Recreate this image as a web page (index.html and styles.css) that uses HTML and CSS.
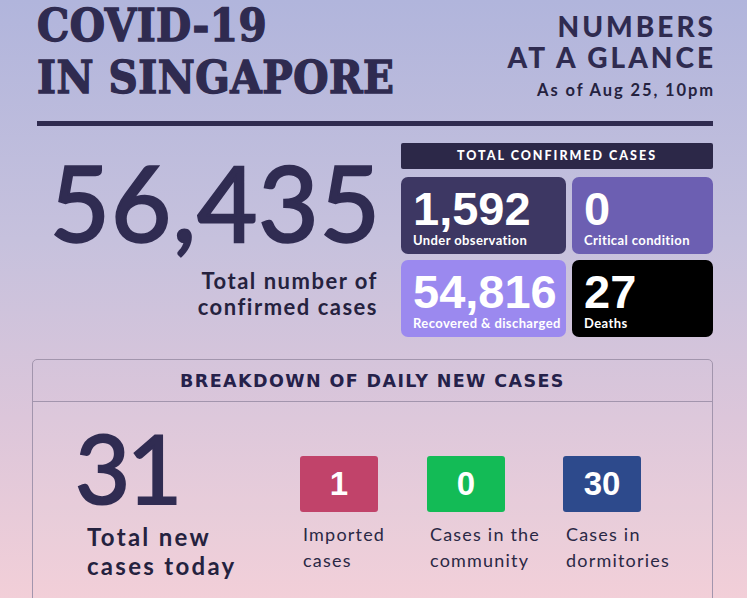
FILE: index.html
```html
<!DOCTYPE html>
<html lang="en">
<head>
<meta charset="utf-8">
<title>COVID-19 in Singapore</title>
<link rel="stylesheet" href="styles.css">
</head>
<body>
<div class="page">
  <header class="top">
    <h1 class="title">COVID-19<br>IN SINGAPORE</h1>
    <div class="glance">
      <div class="glance-h">NUMBERS<br>AT A GLANCE</div>
      <div class="asof">As of Aug 25, 10pm</div>
    </div>
  </header>
  <div class="rule"></div>
  <section class="totals">
    <div class="total-left">
      <div class="bignum">56,435</div>
      <div class="biglabel">Total number of<br>confirmed cases</div>
    </div>
    <div class="total-right">
      <div class="banner">TOTAL CONFIRMED CASES</div>
      <div class="cards">
        <div class="card c-obs"><div class="card-num">1,592</div><div class="card-lbl">Under observation</div></div>
        <div class="card c-crit"><div class="card-num">0</div><div class="card-lbl">Critical condition</div></div>
        <div class="card c-rec"><div class="card-num">54,816</div><div class="card-lbl">Recovered &amp; discharged</div></div>
        <div class="card c-death"><div class="card-num">27</div><div class="card-lbl">Deaths</div></div>
      </div>
    </div>
  </section>
  <section class="breakdown">
    <div class="bd-head">BREAKDOWN OF DAILY NEW CASES</div>
    <div class="bd-body">
      <div class="today">
        <div class="today-num">31</div>
        <div class="today-lbl">Total new<br>cases today</div>
      </div>
      <div class="item">
        <div class="box b-imp">1</div>
        <div class="item-lbl">Imported<br>cases</div>
      </div>
      <div class="item">
        <div class="box b-com">0</div>
        <div class="item-lbl">Cases in the<br>community</div>
      </div>
      <div class="item">
        <div class="box b-dorm">30</div>
        <div class="item-lbl">Cases in<br>dormitories</div>
      </div>
    </div>
  </section>
</div>
</body>
</html>
```

FILE: styles.css
```css
html, body {
  margin: 0;
  padding: 0;
}
body {
  width: 747px;
  height: 598px;
  overflow: hidden;
  background: linear-gradient(to bottom, #b1b5dc 0%, #c6c1dd 40%, #dcc6da 70%, #f2cfd8 100%);
  color: #2e2a4f;
  font-family: "Lato", "Liberation Sans", sans-serif;
}
.page {
  padding: 0 34px 0 37px;
}
.top {
  display: flex;
  justify-content: space-between;
  align-items: flex-start;
}
.title {
  margin: 0;
  font-family: "DejaVu Serif Condensed", "DejaVu Serif", serif;
  font-weight: 700;
  font-size: 45px;
  line-height: 52px;
  color: #2f2b50;
  -webkit-text-stroke: 1.3px #2f2b50;
  letter-spacing: 0.5px;
}
.glance {
  text-align: right;
  padding-top: 11px;
}
.glance-h {
  font-weight: 900;
  font-size: 28px;
  line-height: 31px;
  letter-spacing: 3px;
  margin-right: -3px;
  color: #2f2b50;
}
.asof {
  font-weight: 700;
  font-size: 16.5px;
  line-height: 22px;
  margin-top: 6px;
  letter-spacing: 1.9px;
  margin-right: -2px;
  color: #25223f;
}
.rule {
  height: 5px;
  background: #2f2b50;
  margin-top: 17px;
}
.totals {
  display: grid;
  grid-template-columns: 1fr 312px;
  column-gap: 21px;
  margin-top: 17px;
}
.total-left {
  text-align: right;
}
.bignum {
  font-family: "Lato", sans-serif;
  font-weight: 400;
  font-size: 104px;
  line-height: 100px;
  margin-top: 9px;
  margin-right: -1px;
  color: #302c52;
  -webkit-text-stroke: 2.4px #302c52;
  letter-spacing: 1px;
}
.biglabel {
  font-weight: 700;
  font-size: 22px;
  line-height: 26px;
  letter-spacing: 1.5px;
  margin-top: 16px;
  margin-right: 2px;
  color: #25223f;
}
.banner {
  height: 26px;
  line-height: 26px;
  background: #2c2848;
  color: #fff;
  text-align: center;
  font-weight: 900;
  font-size: 12.5px;
  letter-spacing: 2px;
  border-radius: 2px;
}
.cards {
  display: grid;
  grid-template-columns: 165px 1fr;
  grid-auto-rows: 77px;
  gap: 6px;
  margin-top: 8px;
}
.card {
  border-radius: 7px;
  color: #fff;
  padding: 10px 0 0 12px;
  box-sizing: border-box;
  white-space: nowrap;
}
.card-num {
  font-family: "Liberation Sans", Arial, sans-serif;
  font-weight: 700;
  font-size: 47px;
  line-height: 44px;
}
.card-lbl {
  font-weight: 700;
  font-size: 13px;
  line-height: 18px;
  letter-spacing: 0.4px;
}
.c-obs { background: #3d3763; }
.c-crit { background: #6c5fb2; }
.c-rec { background: #9b89ef; }
.c-death { background: #000; }
.breakdown {
  margin: 22px 0 0 -5px;
  border: 1px solid #a295ad;
  border-radius: 5px;
  height: 300px;
}
.bd-head {
  height: 41px;
  line-height: 42px;
  border-bottom: 1px solid #a295ad;
  text-align: center;
  font-family: "DejaVu Sans", sans-serif;
  font-weight: 700;
  font-size: 17.5px;
  color: #25214a;
  letter-spacing: 1.4px;
}
.bd-body {
  display: grid;
  grid-template-columns: 225px 127px 136px auto;
  align-items: start;
  padding: 20px 0 0 42px;
  background: rgba(255, 255, 255, 0.04);
}
.today-num {
  font-family: "Lato", sans-serif;
  font-weight: 400;
  font-size: 95px;
  line-height: 95px;
  letter-spacing: -3px;
  margin-top: -2px;
  color: #302c52;
  -webkit-text-stroke: 2.2px #302c52;
}
.today-lbl {
  font-weight: 700;
  font-size: 24px;
  line-height: 29px;
  letter-spacing: 2.3px;
  margin: 7px 0 0 12px;
  color: #25223f;
}
.item {
  margin-top: 34px;
}
.box {
  width: 78px;
  height: 56px;
  border-radius: 3px;
  color: #fff;
  text-align: center;
  font-family: "Liberation Sans", Arial, sans-serif;
  font-weight: 700;
  font-size: 33px;
  line-height: 56px;
}
.b-imp { background: #c1436a; }
.b-com { background: #13bb56; }
.b-dorm { background: #2d4a8c; }
.item-lbl {
  font-size: 18px;
  line-height: 26px;
  letter-spacing: 1.2px;
  margin-top: 9px;
  padding-left: 3px;
  color: #2a2845;
}
```
